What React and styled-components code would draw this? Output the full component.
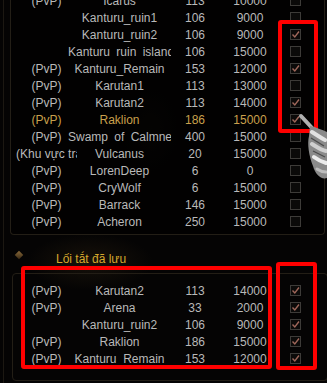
import React from 'react';
import styled, { createGlobalStyle } from 'styled-components';

const GlobalStyle = createGlobalStyle`
  html, body {
    margin: 0;
    padding: 0;
    background: #040403;
  }
  body {
    font-family: "Liberation Sans", Arial, sans-serif;
  }
`;

// Fenêtre principale
const Page = styled.div`
  position: relative;
  width: 327px;
  height: 383px;
  overflow: hidden;
  background:
    radial-gradient(ellipse 90px 40px at 90px 262px, rgba(70, 52, 24, 0.28), transparent 70%),
    radial-gradient(ellipse 40px 60px at 150px 130px, rgba(40, 30, 16, 0.18), transparent 70%),
    #050404;
`;

const Frame = styled.div`
  margin-left: 3px;
  height: 100%;
  border-left: 1px solid #1c1812;
`;

// Liste des cartes
const ListBox = styled.div`
  margin-left: 6px;
  width: 315px;
  height: 235px;
  box-sizing: border-box;
  overflow: hidden;
  border: 1px solid #231e16;
  border-top: none;
  border-radius: 0 0 4px 4px;
  background: rgba(0, 0, 0, 0.55);
`;

const Rows = styled.div`
  margin-top: -7px;
  padding-left: 5px;
`;

const Row = styled.div`
  display: grid;
  grid-template-columns: 52px 103px 48px 62px 28px;
  height: 17px;
  line-height: 17px;
  font-size: 12px;
  color: ${(p) => (p.$gold ? '#c9a04c' : '#b9b9b9')};
  white-space: nowrap;
`;

const Prefix = styled.div`
  width: 61px;
  overflow: hidden;
  text-align: center;
`;

const Name = styled.div`
  overflow: hidden;
  text-align: center;
  word-spacing: 3px;
`;

const Num = styled.div`
  text-align: center;
`;

const CheckCell = styled.div`
  display: flex;
  justify-content: center;
  align-items: center;
  padding-bottom: 3px;
  box-sizing: border-box;
`;

const Box = styled.div`
  width: 11px;
  height: 11px;
  box-sizing: border-box;
  border: 1px solid #3d3b38;
  background: #0b0a09;
  display: flex;
  align-items: center;
  justify-content: center;
`;

// Titre de section
const Header = styled.div`
  display: flex;
  align-items: center;
  height: 16px;
  margin-top: 16px;
  padding-left: 12px;
`;

const Diamond = styled.span`
  width: 6px;
  height: 6px;
  margin-top: -8px;
  background: linear-gradient(135deg, #8a6a3a, #3a2a14);
  transform: rotate(45deg);
`;

const Title = styled.span`
  margin-left: 34px;
  font-size: 12px;
  color: #d6a82c;
`;

const SavedBox = styled.div`
  margin: 6px 0 0 8px;
  width: 316px;
  height: 108px;
  box-sizing: border-box;
  border: 1px solid #231e16;
  border-radius: 4px;
  padding-top: 9px;
  padding-left: 3px;
`;

// Cadres rouges d'annotation
const Mark = styled.div`
  position: absolute;
  left: ${(p) => p.$x}px;
  top: ${(p) => p.$y}px;
  width: ${(p) => p.$w}px;
  height: ${(p) => p.$h}px;
  box-sizing: border-box;
  border: 4px solid #ff0000;
  border-radius: 3px;
`;

const Cursor = styled.svg`
  position: absolute;
  left: 298px;
  top: 110px;
`;

const list = [
  { pre: '(PvP)', name: 'Icarus', lvl: 113, zen: 10000 },
  { pre: '', name: 'Kanturu_ruin1', lvl: 106, zen: 9000 },
  { pre: '', name: 'Kanturu_ruin2', lvl: 106, zen: 9000, on: true },
  { pre: '', name: 'Kanturu ruin island', lvl: 106, zen: 15000 },
  { pre: '(PvP)', name: 'Kanturu_Remain', lvl: 153, zen: 12000, on: true },
  { pre: '(PvP)', name: 'Karutan1', lvl: 113, zen: 13000 },
  { pre: '(PvP)', name: 'Karutan2', lvl: 113, zen: 14000, on: true },
  { pre: '(PvP)', name: 'Raklion', lvl: 186, zen: 15000, on: true, gold: true },
  { pre: '(PvP)', name: 'Swamp of Calmness', lvl: 400, zen: 15000 },
  { pre: '(Khu vực trận chiến)', name: 'Vulcanus', lvl: 20, zen: 15000 },
  { pre: '(PvP)', name: 'LorenDeep', lvl: 6, zen: 0 },
  { pre: '(PvP)', name: 'CryWolf', lvl: 6, zen: 15000 },
  { pre: '(PvP)', name: 'Barrack', lvl: 146, zen: 15000 },
  { pre: '(PvP)', name: 'Acheron', lvl: 250, zen: 15000 },
];

const saved = [
  { pre: '(PvP)', name: 'Karutan2', lvl: 113, zen: 14000, on: true },
  { pre: '(PvP)', name: 'Arena', lvl: 33, zen: 2000, on: true },
  { pre: '', name: 'Kanturu_ruin2', lvl: 106, zen: 9000, on: true },
  { pre: '(PvP)', name: 'Raklion', lvl: 186, zen: 15000, on: true },
  { pre: '(PvP)', name: 'Kanturu_Remain', lvl: 153, zen: 12000, on: true },
];

const Check = ({ on }) => (
  <Box>
    {on && (
      <svg width="9" height="9" viewBox="0 0 9 9">
        <path d="M1.5 4.5 L3.8 7 L8 1.5" fill="none" stroke="#9e665a" strokeWidth="1.4" />
      </svg>
    )}
  </Box>
);

const MapRow = ({ m }) => (
  <Row $gold={m.gold}>
    <Prefix>{m.pre}</Prefix>
    <Name>{m.name}</Name>
    <Num>{m.lvl}</Num>
    <Num>{m.zen}</Num>
    <CheckCell>
      <Check on={m.on} />
    </CheckCell>
  </Row>
);

const App = () => (
  <Page>
    <GlobalStyle />
    <Frame>
      <ListBox>
        <Rows>
          {list.map((m) => (
            <MapRow key={m.name} m={m} />
          ))}
        </Rows>
      </ListBox>
      <Header>
        <Diamond />
        <Title>Lối tắt đã lưu</Title>
      </Header>
      <SavedBox>
        {saved.map((m) => (
          <MapRow key={m.name} m={m} />
        ))}
      </SavedBox>
    </Frame>

    <Mark $x={278} $y={20} $w={40} $h={113} />
    <Mark $x={21} $y={266} $w={251} $h={103} />
    <Mark $x={276} $y={262} $w={41} $h={108} />

    {/* gant du curseur */}
    <Cursor width="29" height="75" viewBox="0 0 29 75">
      <path d="M3 6 L15 19" stroke="#b0b0b0" strokeWidth="4" strokeLinecap="round" />
      <path
        d="M12 16 C18 17 24 20 29 22 L29 68 C23 70 17 64 15 56 C11 46 9 34 11 26 Z"
        fill="#8a8a8a"
      />
      <path d="M14 22 C19 25 23 28 27 30" stroke="#e2e2e2" strokeWidth="4" fill="none" strokeLinecap="round" />
      <path d="M14 34 C19 37 23 40 28 41" stroke="#d0d0d0" strokeWidth="4" fill="none" strokeLinecap="round" />
      <path d="M16 47 C20 50 24 52 28 53" stroke="#ececec" strokeWidth="4" fill="none" strokeLinecap="round" />
      <path d="M19 59 C22 61 25 62 28 62" stroke="#bdbdbd" strokeWidth="3" fill="none" strokeLinecap="round" />
      <path d="M13 28 L26 36" stroke="#4a4a4a" strokeWidth="1.2" />
      <path d="M15 41 L27 47" stroke="#4a4a4a" strokeWidth="1.2" />
    </Cursor>
  </Page>
);

export default App;
